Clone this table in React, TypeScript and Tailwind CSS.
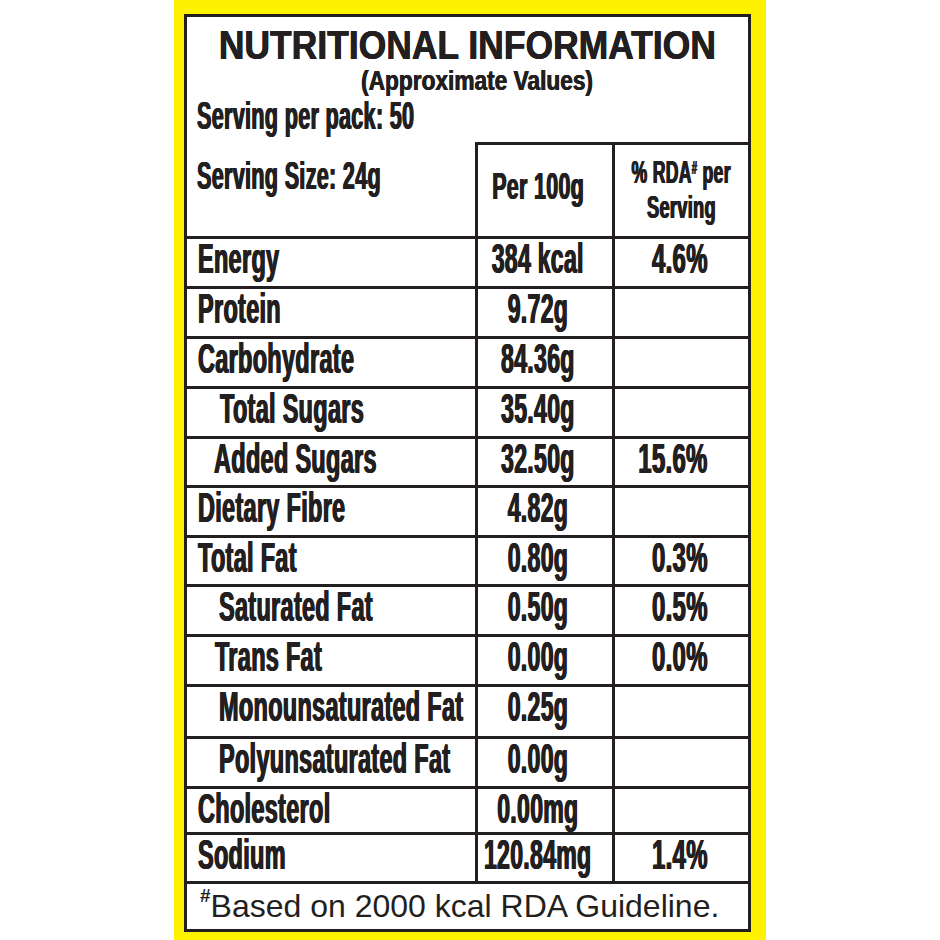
import React from "react";

type Row = {
  label: string;
  v: string;
  r: string;
  h: string;
  pl: string;
};

const rows: Row[] = [
  { label: "Energy", v: "384 kcal", r: "4.6%", h: "h-[50px]", pl: "pl-[11px]" },
  { label: "Protein", v: "9.72g", r: "", h: "h-[50px]", pl: "pl-[11px]" },
  { label: "Carbohydrate", v: "84.36g", r: "", h: "h-[50px]", pl: "pl-[11px]" },
  { label: "Total Sugars", v: "35.40g", r: "", h: "h-[50px]", pl: "pl-[33px]" },
  { label: "Added Sugars", v: "32.50g", r: "15.6%", h: "h-[49px]", pl: "pl-[27px]" },
  { label: "Dietary Fibre", v: "4.82g", r: "", h: "h-[50px]", pl: "pl-[11px]" },
  { label: "Total Fat", v: "0.80g", r: "0.3%", h: "h-[49px]", pl: "pl-[11px]" },
  { label: "Saturated Fat", v: "0.50g", r: "0.5%", h: "h-[50px]", pl: "pl-[32px]" },
  { label: "Trans Fat", v: "0.00g", r: "0.0%", h: "h-[50px]", pl: "pl-[28px]" },
  { label: "Monounsaturated Fat", v: "0.25g", r: "", h: "h-[52px]", pl: "pl-[32px]" },
  { label: "Polyunsaturated Fat", v: "0.00g", r: "", h: "h-[50px]", pl: "pl-[32px]" },
  { label: "Cholesterol", v: "0.00mg", r: "", h: "h-[46px]", pl: "pl-[11px]" },
  { label: "Sodium", v: "120.84mg", r: "1.4%", h: "h-[49px]", pl: "pl-[11px]" },
];

const heavy = "[text-shadow:0.9px_0_0_#231f20,-0.9px_0_0_#231f20] tracking-[0.5px]";
const light = "[text-shadow:0.4px_0_0_#231f20,-0.4px_0_0_#231f20]";

export default function App() {
  return (
    <div className="w-[940px] h-[940px] bg-white flex justify-center">
      <div className="w-[592px] h-[940px] bg-[#fff200] pt-[14px] pl-[10px] pr-[15px]">
        <div className="w-[567px] border-[3px] border-[#231f20] bg-white text-[#231f20] [font-family:'Liberation_Sans',Arial,sans-serif] font-bold">
          {/* Title */}
          <div className="h-[56px] leading-[56px] flex justify-center">
            <span className={`inline-block whitespace-nowrap text-[41px] scale-x-[0.865] origin-center ${light}`}>
              NUTRITIONAL INFORMATION
            </span>
          </div>
          <div className="h-[17px] leading-[17px] flex justify-center pl-[20px]">
            <span className={`inline-block whitespace-nowrap text-[27px] scale-x-[0.84] origin-center ${light}`}>
              (Approximate Values)
            </span>
          </div>
          <div className="h-[52px] leading-[52px] pl-[10px]">
            <span className={`inline-block whitespace-nowrap text-[39px] scale-x-[0.555] origin-left ${heavy}`}>
              Serving per pack: 50
            </span>
          </div>

          {/* Header row */}
          <div className="grid grid-cols-[291px_137px_133px] h-[97px] border-b-[3px] border-[#231f20]">
            <div className="border-r-[3px] border-[#231f20] pl-[10px] pt-[8px] leading-[52px]">
              <span className={`inline-block whitespace-nowrap text-[39px] scale-x-[0.555] origin-left ${heavy}`}>
                Serving Size: 24g
              </span>
            </div>
            <div className="border-t-[3px] border-r-[3px] border-[#231f20] flex justify-center items-start pr-[14px] pt-[22px] leading-[40px]">
              <span className={`inline-block whitespace-nowrap text-[37px] scale-x-[0.58] origin-center ${heavy}`}>
                Per 100g
              </span>
            </div>
            <div className="border-t-[3px] border-[#231f20] flex flex-col items-center pt-[10px] leading-[35px]">
              <span className={`inline-block whitespace-nowrap text-[32px] scale-x-[0.55] origin-center ${heavy}`}>
                % RDA<sup className="text-[18px]">#</sup> per
              </span>
              <span className={`inline-block whitespace-nowrap text-[32px] scale-x-[0.57] origin-center ${heavy}`}>
                Serving
              </span>
            </div>
          </div>

          {/* Data rows */}
          {rows.map((row) => (
            <div
              key={row.label}
              className={`grid grid-cols-[291px_137px_133px] border-b-[3px] border-[#231f20] ${row.h}`}
            >
              <div className={`border-r-[3px] border-[#231f20] leading-[40px] ${row.pl}`}>
                <span className={`inline-block whitespace-nowrap text-[42px] scale-x-[0.56] origin-left ${heavy}`}>
                  {row.label}
                </span>
              </div>
              <div className="border-r-[3px] border-[#231f20] flex justify-center items-start pr-[14px] leading-[40px]">
                <span className={`inline-block whitespace-nowrap text-[42px] scale-x-[0.55] origin-center ${heavy}`}>
                  {row.v}
                </span>
              </div>
              <div className="flex justify-end items-start pr-[40px] leading-[40px]">
                {row.r && (
                  <span className={`inline-block whitespace-nowrap text-[42px] scale-x-[0.57] origin-right ${heavy}`}>
                    {row.r}
                  </span>
                )}
              </div>
            </div>
          ))}

          {/* Footer */}
          <div className="h-[45px] leading-[44px] pl-[13px] font-normal whitespace-nowrap">
            <sup className="text-[19px] font-bold top-[-0.8em]">#</sup>
            <span className="text-[32px]">Based on 2000 kcal RDA Guideline.</span>
          </div>
        </div>
      </div>
    </div>
  );
}
